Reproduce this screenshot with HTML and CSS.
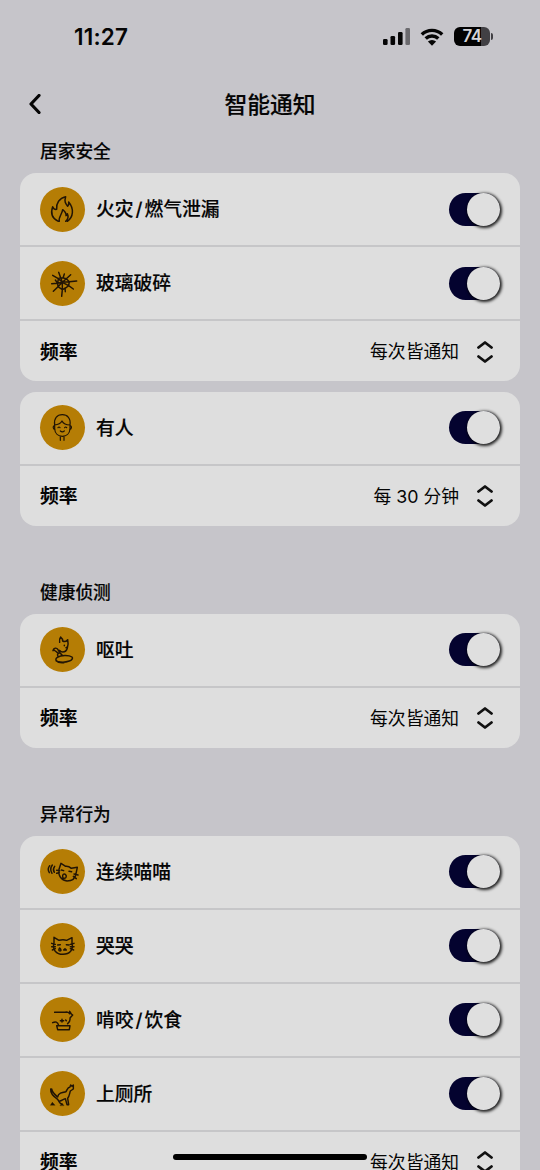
FILE: index.html
```
<!DOCTYPE html>
<html lang="zh-CN">
<head>
<meta charset="utf-8">
<title>智能通知</title>
<link rel="stylesheet" href="styles.css">
</head>
<body>
<svg class="defs" width="0" height="0">
  <symbol id="updown" viewBox="0 0 16 22"><path d="M1.500 6.500 8 1.500l6.500 5M1.500 15.500 8 20.500l6.500-5"/></symbol>
</svg>
<header class="status">
  <span class="time">11:27</span>
  <div class="indicators">
    <svg class="signal" width="27" height="17" viewBox="0 0 27 17"><rect x="0" y="11" width="4.600" height="6" rx="1.300"/><rect x="7.500" y="8" width="4.600" height="9" rx="1.300"/><rect x="15" y="4" width="4.600" height="13" rx="1.300"/><rect class="dim" x="22.400" y="0" width="4.600" height="17" rx="1.300"/></svg>
    <svg class="wifi" width="24" height="18" viewBox="0 0 24 18"><path class="arc" d="M1.800 6.500a14.600 14.600 0 0 1 20.400 0M5.700 10.500a9 9 0 0 1 12.600 0"/><path d="M7.900 13.600a6 6 0 0 1 8.200 0L12 17.800z"/></svg>
    <div class="battery"><span>74</span></div>
  </div>
</header>
<nav class="bar">
  <svg class="back" width="14" height="20" viewBox="0 0 14 20"><path d="M11 1.500 3 10l8 8.500"/></svg>
  <h1>智能通知</h1>
</nav>
<main>
  <section>
    <h2>居家安全</h2>
    <div class="card">
      <div class="row">
        <svg class="icon" viewBox="0 0 135 135"><path d="M55 103C38 95 31 79 38 59c3 7 7 9 12 8-2-18 8-34 27-38-5 15 0 21 6 29 3-3 4-7 3-13 17 20 14 46-4 58M58 103c-4-11 8-20 10-35 9 7 11 12 10 18 3-1 4-3 4-6 4 9 2 17-5 23"/></svg>
        <span class="name">火灾<i>/</i>燃气泄漏</span><span class="switch"></span>
      </div>
      <div class="row">
        <svg class="icon" viewBox="0 0 135 135"><path d="M56 34l6 16 5 14M38 43l17 10 12 11M35 68l18-1 14-3M40 91l14-14 13-13M65 106l2-20v-22M100 84L86 74 67 64M110 60l-22 2-21 2M92 41L79 53 67 64M62 50l-7 3-2 14 1 10 13 9 10-5 9-7 2-12-9-9-9-2zM73 39l-4 12M46 57l7 10M76 92l-1-11"/></svg>
        <span class="name">玻璃破碎</span><span class="switch"></span>
      </div>
      <div class="row freq"><span class="name">频率</span><span class="value">每次皆通知</span><svg class="sort"><use href="#updown"/></svg></div>
    </div>
    <div class="card">
      <div class="row">
        <svg class="icon person" viewBox="0 0 135 135"><path d="M44 60v12c1 14 11 22 23 22s22-8 23-22V60M44 60c-3-20 7-31 23-31 15 0 26 11 23 31M44 60c10-1 18-5 22-12 4 8 13 12 24 12M44 62c-6 0-6 11 1 12M90 62c6 0 6 11-1 12M54 68q3-4 6 0M74 68q3-4 6 0M61 78q6 5 12 0M61 95v11M72 95v11"/></svg>
        <span class="name">有人</span><span class="switch"></span>
      </div>
      <div class="row freq"><span class="name">频率</span><span class="value">每 30 分钟</span><svg class="sort"><use href="#updown"/></svg></div>
    </div>
  </section>
  <section>
    <h2>健康侦测</h2>
    <div class="card">
      <div class="row">
        <svg class="icon" viewBox="0 0 135 135"><path d="M59 46c-1-7 0-12 3-16 4 3 6 7 6 12 5 3 10 2 15-4 2 9 2 17-1 25-2 8-7 12-14 12-4 0-7-2-9-5M39 71c1-9 11-10 15-3 3 7 6 11 13 17M43 70c6 2 6 6 12 9M58 78c-7 2-6 6-4 10M73 55v1M82 60l-4 2M52 91c11-7 35-7 44-1 4 4-1 10-8 12-11 4-26 4-35 1-7-3-7-8-1-12ZM48 101c5 5 16 7 24 6"/></svg>
        <span class="name">呕吐</span><span class="switch"></span>
      </div>
      <div class="row freq"><span class="name">频率</span><span class="value">每次皆通知</span><svg class="sort"><use href="#updown"/></svg></div>
    </div>
  </section>
  <section>
    <h2>异常行为</h2>
    <div class="card">
      <div class="row">
        <svg class="icon" viewBox="0 0 135 135"><path d="M29 50q-8 10-1 21M37 48q-9 12-1 25M44 52q-7 9-1 18M57 61l6-18 14 9q9-1 17 6l18-3-4 19c-2 15-12 22-27 22-17-2-27-15-24-35M50 64l9 1M50 73l8-2M102 75l12 3M100 82l9 7M64 63l7 2M87 67l8 1M68 84c-1-8 4-11 8-8 5 4 3 12-3 12-3 0-5-1-5-4Z"/></svg>
        <span class="name">连续喵喵</span><span class="switch"></span>
      </div>
      <div class="row">
        <svg class="icon" viewBox="0 0 135 135"><path d="M42 60V43l15 9q12-3 23 0l16-8v17c5 20-7 33-27 33S36 80 42 60M35 61l11 3M35 71h11M37 81l9-4M91 64l11-3M91 71h11M91 77l10 4M53 66l8-1M79 65l8 1M59 75c-4 6-3 9 1 9 4 0 4-4-1-9ZM71 81l4-4 4 4z"/></svg>
        <span class="name">哭哭</span><span class="switch"></span>
      </div>
      <div class="row">
        <svg class="icon" viewBox="0 0 135 135"><path d="M44 46c12-2 24 2 36-1 5 0 7 3 9 5v-7l5 8 4 3-8 9c1 6-1 12-7 17M38 77c8-4 15-3 18 8M50 86h40l-2 12H53zM66 67v8M61 71h10M77 69l2 2"/></svg>
        <span class="name">啃咬<i>/</i>饮食</span><span class="switch"></span>
      </div>
      <div class="row">
        <svg class="icon" viewBox="0 0 135 135"><path d="M32 54c-1 13 9 23 21 31l7 11 6 4M35 54c2 11 11 18 18 24 2-12 12-14 25-16 4-7 5-13 12-14l2-6 4 4 4-4v12l-9 6c-3 10-3 16-8 22l3 19h-5l-5-18c-7 2-10 6-18 8"/><path class="fill" d="M32 102l5-8 7 8zM61 103l5-6 5 6z"/></svg>
        <span class="name">上厕所</span><span class="switch"></span>
      </div>
      <div class="row freq"><span class="name">频率</span><span class="value">每次皆通知</span><svg class="sort"><use href="#updown"/></svg></div>
    </div>
  </section>
</main>
<div class="home"></div>
</body>
</html>
```
FILE: styles.css
```
* { box-sizing: border-box; }
body {
  margin: 0;
  height: 1170px;
  overflow: hidden;
  background: #c6c5ca;
  color: #050505;
  font-family: Inter, "Noto Sans CJK SC", sans-serif;
}
.defs { position: absolute; }
svg { display: block; flex: none; }
.status {
  height: 73px;
  padding: 0 50px 0 74px;
  display: flex;
  align-items: center;
  justify-content: space-between;
}
.time { font-size: 22.5px; font-weight: 600; letter-spacing: 0.2px; }
.indicators { display: flex; align-items: center; gap: 10px; }
.signal, .wifi { fill: #050505; }
.signal .dim { fill: #6b6a6e; }
.wifi .arc { fill: none; stroke: #050505; stroke-width: 3.4; }
.battery {
  position: relative;
  width: 36px;
  height: 19px;
  border-radius: 6px;
  background: linear-gradient(90deg, #020202 74%, #414044 74%);
  color: #d5d4d8;
  font-size: 17px;
  font-weight: 600;
  line-height: 19px;
  text-align: center;
  letter-spacing: -0.5px;
}
.battery::after {
  content: "";
  position: absolute;
  left: 37px;
  top: 6px;
  width: 2px;
  height: 7px;
  border-radius: 0 2px 2px 0;
  background: #414044;
}
.bar {
  height: 62px;
  padding: 0 28px;
  display: grid;
  grid-template-columns: 14px 1fr 14px;
  align-items: center;
}
.back { fill: none; stroke: #050505; stroke-width: 3.2; stroke-linecap: round; stroke-linejoin: round; }
h1 {
  margin: 0;
  padding-top: 1px;
  text-align: center;
  font-size: 22.8px;
  line-height: 32px;
  font-weight: 500;
  -webkit-text-stroke: 0.15px;
}
main { padding: 0 20px; }
section { margin-bottom: 44px; }
h2 {
  height: 44px;
  margin: 0;
  padding: 11px 20px 0;
  font-size: 17.7px;
  line-height: 24px;
  font-weight: 500;
  -webkit-text-stroke: 0.15px;
}
section:first-child h2 { height: 38.4px; padding-top: 5px; }
.card {
  margin-bottom: 10.4px;
  border-radius: 16px;
  overflow: hidden;
  background: #dedede;
}
section .card:last-child { margin-bottom: 0; }
.row { height: 74px; padding: 0 20px; display: flex; align-items: center; border-bottom: 2px solid #c6c6c8; }
.row.freq { height: 60px; border: 0; padding-top: 1px; }
.icon {
  width: 45px;
  height: 45px;
  margin-right: 11px;
  border-radius: 50%;
  background: #b57d05;
  fill: none;
  stroke: #211405;
  stroke-width: 4.4;
  stroke-linecap: round;
  stroke-linejoin: round;
}
.icon .fill { fill: #211405; stroke-width: 1.5; }
.icon.person { stroke-width: 3.6; }
.name {
  flex: 1;
  padding-top: 2px;
  font-size: 18.8px;
  line-height: 28px;
  font-weight: 500;
  -webkit-text-stroke: 0.15px;
}
.name i { font-style: normal; margin: 0 2px; }
.freq .name { padding-top: 2px; font-weight: 700; -webkit-text-stroke: 0; }
.value { padding-top: 1px; font-size: 17.8px; line-height: 26px; margin-right: 18px; }
.sort { width: 16px; height: 22px; margin-right: 7px; fill: none; stroke: #111; stroke-width: 2.8; stroke-linecap: round; stroke-linejoin: round; }
.switch {
  display: flex;
  justify-content: flex-end;
  width: 51px;
  height: 33px;
  border-radius: 17px;
  background: #04032f;
}
.switch::after {
  content: "";
  width: 33px;
  height: 33px;
  border-radius: 50%;
  background: #dfdfdf;
  box-shadow: 1px 1px 3px 1px rgba(0, 0, 0, 0.85);
}
.home {
  position: absolute;
  left: 173px;
  top: 1154px;
  width: 194px;
  height: 6px;
  border-radius: 3px;
  background: #000;
}
```
